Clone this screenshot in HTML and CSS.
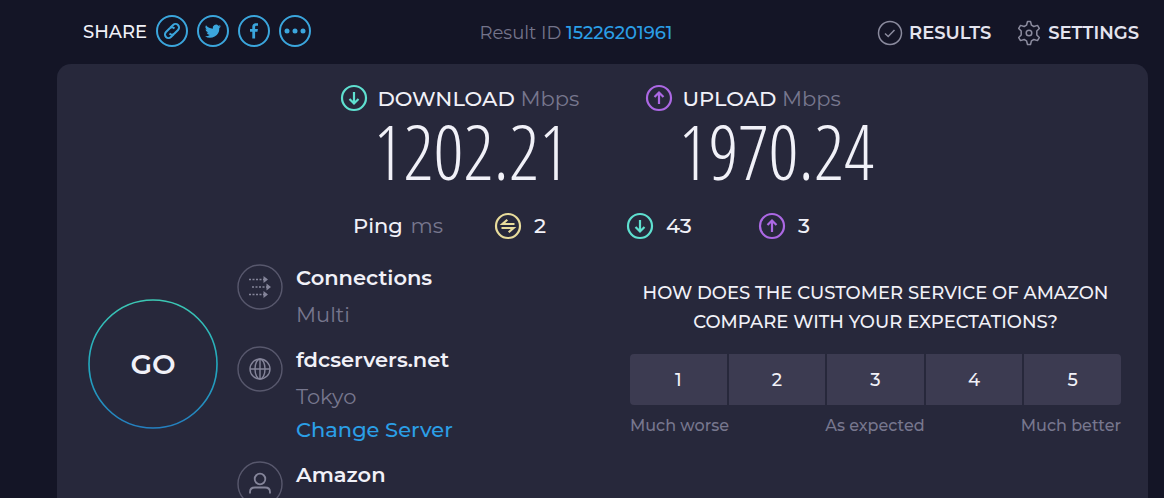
FILE: index.html
```html
<!DOCTYPE html>
<html lang="en">
<head>
<meta charset="utf-8">
<meta name="viewport" content="width=device-width, initial-scale=1">
<title>Speed test result</title>
<link rel="stylesheet" href="styles.css">
</head>
<body>
<svg class="defs" width="0" height="0" aria-hidden="true">
  <symbol id="down" viewBox="0 0 28 28"><circle cx="14" cy="14" r="12"/><path d="M14 8v12M9.500 15l4.500 4.500 4.500-4.500"/></symbol>
  <symbol id="up" viewBox="0 0 28 28"><circle cx="14" cy="14" r="12"/><path d="M14 20V8.500M9.500 13L14 8.500l4.500 4.500"/></symbol>
</svg>

<header class="topbar">
  <div class="share">
    <span class="share-label">SHARE</span>
    <a class="share-link" href="#link" aria-label="Copy link"><svg viewBox="0 0 32 32"><circle cx="16" cy="16" r="15"/><g transform="rotate(-45 16 16)"><path d="M15 19.500h-4a3.500 3.500 0 0 1 0-7h5a3.500 3.500 0 0 1 3.500 3.500"/><path d="M17 12.500h4a3.500 3.500 0 0 1 0 7h-5a3.500 3.500 0 0 1-3.500-3.500"/></g></svg></a>
    <a class="share-link" href="#twitter" aria-label="Twitter"><svg viewBox="0 0 32 32"><circle cx="16" cy="16" r="15"/><path class="solid" d="M24 11.200a6 6 0 0 1-1.900.5 3.300 3.300 0 0 0 1.400-1.800 6.500 6.500 0 0 1-2.100.8 3.300 3.300 0 0 0-5.600 3A9.300 9.300 0 0 1 9 10.300a3.300 3.300 0 0 0 1 4.400 3.300 3.300 0 0 1-1.500-.4 3.300 3.300 0 0 0 2.600 3.200 3.300 3.300 0 0 1-1.500.1 3.300 3.300 0 0 0 3.100 2.300A6.600 6.600 0 0 1 8 21.200a9.300 9.300 0 0 0 14.300-8.300A6.600 6.600 0 0 0 24 11.200z"/></svg></a>
    <a class="share-link" href="#facebook" aria-label="Facebook"><svg viewBox="0 0 32 32"><circle cx="16" cy="16" r="15"/><path class="solid" d="M14.300 23.500v-6.800H12v-2.700h2.300v-2.200c0-2.400 1.400-3.600 3.500-3.600l2.200.1v2.400h-1.500c-1.200 0-1.400.6-1.400 1.400V14h2.800l-.4 2.700h-2.400v6.800z"/></svg></a>
    <a class="share-link" href="#more" aria-label="More"><svg viewBox="0 0 32 32"><circle cx="16" cy="16" r="15"/><g class="solid"><circle cx="8" cy="16" r="2.500"/><circle cx="16" cy="16" r="2.500"/><circle cx="24" cy="16" r="2.500"/></g></svg></a>
  </div>
  <p class="result-id">Result ID <a href="#result">15226201961</a></p>
  <nav class="menu">
    <a href="#results"><svg viewBox="0 0 26 26"><circle cx="13" cy="13" r="11.500"/><path d="M8 13.500l3.200 3 6.300-6.500"/></svg>RESULTS</a>
    <a href="#settings"><svg viewBox="0 0 26 26"><path stroke-linejoin="round" d="M11.500 1.500h3l1 3.700 2.300 1.300 3.700-1.100 1.800 3-2.500 2.600v4l2.500 2.600-1.800 3-3.700-1.100-2.300 1.300-1 3.700h-3l-1-3.700-2.300-1.300-3.700 1.100-1.800-3L5.200 15v-4L2.700 8.400l1.800-3 3.700 1.100 2.300-1.300z"/><circle cx="13" cy="13" r="2.800"/></svg>SETTINGS</a>
  </nav>
</header>

<main class="card">
  <section class="speeds">
    <div class="speed">
      <svg class="icon download"><use href="#down"/></svg>
      <h2>DOWNLOAD <span>Mbps</span></h2>
      <p class="figure">1202.21</p>
    </div>
    <div class="speed">
      <svg class="icon upload"><use href="#up"/></svg>
      <h2>UPLOAD <span>Mbps</span></h2>
      <p class="figure">1970.24</p>
    </div>
  </section>

  <section class="pings">
    <h3>Ping <span>ms</span></h3>
    <div class="ping"><svg class="icon idle" viewBox="0 0 28 28"><circle cx="14" cy="14" r="12"/><path d="M20.500 12H8.500l4.800-4.300M7.500 16h12l-4.800 4.300"/></svg>2</div>
    <div class="ping"><svg class="icon download"><use href="#down"/></svg>43</div>
    <div class="ping"><svg class="icon upload"><use href="#up"/></svg>3</div>
  </section>

  <section class="details">
    <button class="go" type="button"><svg viewBox="0 0 130 130" aria-hidden="true"><defs><linearGradient id="ring" x1="0" y1="0" x2="0" y2="1"><stop offset="0" stop-color="#3cc8b4"/><stop offset=".5" stop-color="#22a9be"/><stop offset="1" stop-color="#247fc0"/></linearGradient></defs><circle cx="65" cy="65" r="64" fill="none" stroke="url(#ring)" stroke-width="1.600"/></svg><span>GO</span></button>

    <div class="info">
      <div class="info-item">
        <svg viewBox="0 0 46 46"><circle class="rim" cx="23" cy="23" r="22"/><g stroke-dasharray="2 1.500"><path d="M12 15.500h15M15 23h15M12 30.500h15"/></g><path class="tip" d="M26.500 12l4.500 3.500-4.500 3.500zM29.500 19.500L34 23l-4.500 3.500zM26.500 27l4.500 3.500-4.500 3.500z"/></svg>
        <div><h3>Connections</h3><p>Multi</p></div>
      </div>
      <div class="info-item">
        <svg viewBox="0 0 46 46"><circle class="rim" cx="23" cy="23" r="22"/><circle cx="23" cy="23" r="10"/><ellipse cx="23" cy="23" rx="5" ry="10"/><path d="M13 23h20M23 13v20"/></svg>
        <div><h3>fdcservers.net</h3><p>Tokyo</p><a href="#servers">Change Server</a></div>
      </div>
      <div class="info-item">
        <svg viewBox="0 0 46 46"><circle class="rim" cx="23" cy="23" r="22"/><g stroke-width="1.800"><circle cx="23" cy="18" r="5.300"/><path d="M13 32.500v-1.500c0-3 2-4.500 5-4.500h10c3 0 5 1.500 5 4.500v1.500"/></g></svg>
        <div><h3>Amazon</h3></div>
      </div>
    </div>

    <div class="survey">
      <h3>HOW DOES THE CUSTOMER SERVICE OF AMAZON<br>COMPARE WITH YOUR EXPECTATIONS?</h3>
      <div class="scale">
        <button type="button">1</button><button type="button">2</button><button type="button">3</button><button type="button">4</button><button type="button">5</button>
      </div>
      <div class="legend"><span>Much worse</span><span>As expected</span><span>Much better</span></div>
    </div>
  </section>
</main>
</body>
</html>
```
FILE: styles.css
```css
* { box-sizing: border-box; }

body {
  margin: 0;
  height: 100vh;
  overflow: hidden;
  display: flex;
  flex-direction: column;
  background: #141526;
  color: #f1f1f8;
  font: 500 20px/26px Montserrat, Inter, sans-serif;
}

h2, h3, p { margin: 0; font: inherit; }
a { color: #2b9fe6; text-decoration: none; }
svg { fill: none; stroke: currentColor; flex: none; }
button { border: 0; padding: 0; color: inherit; font: inherit; cursor: pointer; }
.defs { position: absolute; }

.topbar {
  display: grid;
  grid-template-columns: 1fr auto 1fr;
  align-items: center;
  height: 64px;
  padding: 0 12px 3px 0;
  flex: none;
}
.share { display: flex; align-items: center; gap: 9px; padding-left: 83px; }
.share-label { font-size: 18px; padding-top: 2px; }
.share-link { height: 32px; color: #3ba6dd; }
.share-link svg { width: 32px; height: 32px; stroke-width: 2; }
.solid { fill: currentColor; stroke: none; }
.result-id { color: #74748b; font-size: 18px; font-weight: 400; padding-top: 4px; }
.result-id a { font-weight: 500; }
.menu { display: flex; justify-content: flex-end; gap: 25px; padding: 5px 13px 0 0; }
.menu a { display: flex; align-items: center; gap: 6px; color: #e4e4ef; font-size: 18px; font-weight: 600; }
.menu svg { width: 26px; height: 26px; stroke: #8b8b9e; stroke-width: 1.5; }

.card {
  flex: 1 0 auto;
  margin: 0 16px 0 57px;
  padding: 20px 27px 0 31px;
  border-radius: 14px 14px 0 0;
  background: #27283b;
}
.icon { width: 28px; height: 28px; stroke-width: 2.2; }
.download { color: #5fe0d0; }
.upload { color: #ac68e4; }
.idle { color: #e8dc9c; }

.speeds { display: grid; grid-template-columns: 305px 225px; justify-content: center; }
.speed { display: grid; grid-template-columns: 28px auto; justify-content: start; column-gap: 10px; }
.speed h2 { font-size: 21px; line-height: 30px; }
.speed span, .pings span { color: #77778e; font-weight: 400; }
.figure {
  grid-column: 2;
  margin-left: -4px;
  font: 300 75px/74px "Open Sans Condensed Light", "Roboto Condensed", sans-serif;
}

.pings {
  display: grid;
  grid-template-columns: 141px 132px 132px 54px;
  justify-content: center;
  align-items: center;
  margin-top: 24px;
  padding-right: 44px;
  font-size: 21px;
}
.pings span { margin-left: 2px; }
.ping { display: flex; align-items: center; gap: 12px; }

.details {
  display: grid;
  grid-template-columns: 130px minmax(0, 374fr) minmax(0, 491fr);
  gap: 19px;
  margin-top: 24px;
}
.go { display: grid; place-items: center; width: 130px; height: 130px; margin-top: 35px; border-radius: 50%; background: none; font-size: 28px; font-weight: 600; }
.go > * { grid-area: 1 / 1; }
.go svg { width: 130px; height: 130px; }

.info { display: flex; flex-direction: column; gap: 18px; }
.info-item { display: flex; align-items: flex-start; gap: 13px; }
.info-item svg { width: 46px; height: 46px; color: #85859a; stroke-width: 1.4; }
.info-item .rim { stroke: #58586d; }
.info-item .tip { fill: currentColor; stroke: none; }
.info-item h3 { font-size: 21px; line-height: 27px; font-weight: 600; }
.info-item p { margin-top: 11px; color: #77778e; font-size: 21px; font-weight: 400; }
.info-item a { display: block; margin-top: 7px; font-size: 21px; }

.survey { padding-top: 15px; }
.survey h3 { text-align: center; font-size: 18px; line-height: 29px; }
.scale { display: grid; grid-template-columns: repeat(5, 1fr); gap: 2px; margin-top: 17px; border-radius: 4px; overflow: hidden; }
.scale button { height: 51px; background: #3c3b51; font-size: 18px; }
.legend { display: flex; justify-content: space-between; margin-top: 8px; color: #77778e; font-size: 16px; font-weight: 500; }
```
